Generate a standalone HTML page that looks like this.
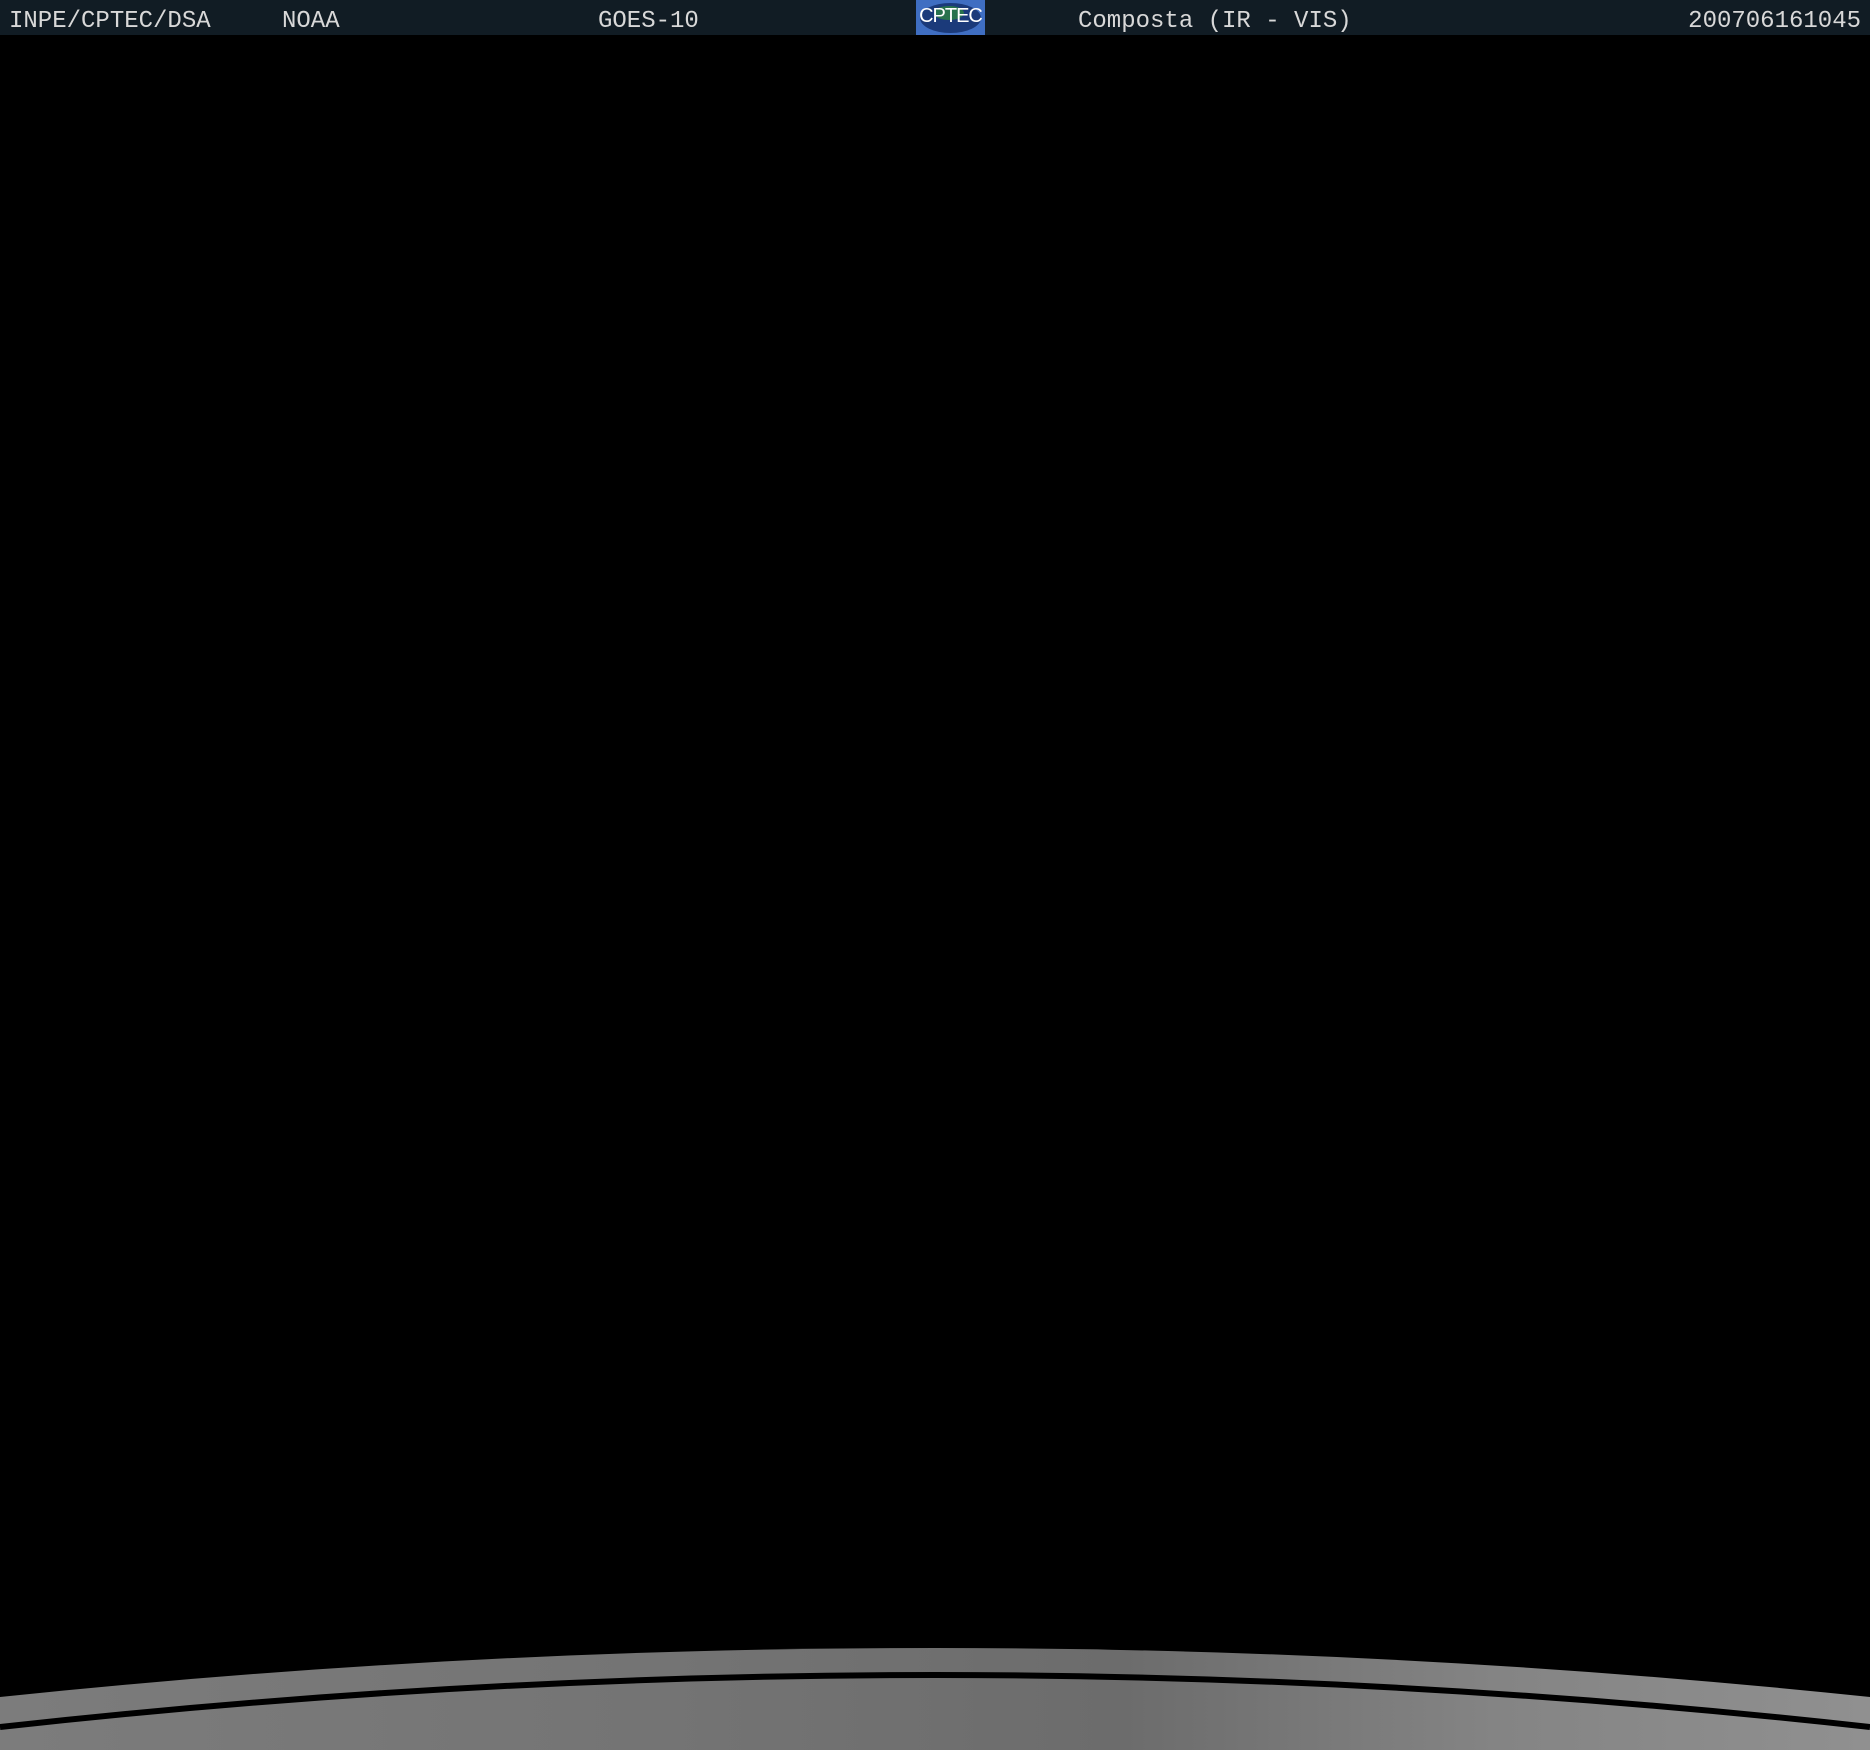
<!DOCTYPE html>
<html><head><meta charset="utf-8"><style>
html,body{margin:0;padding:0;background:#000;width:1870px;height:1750px;overflow:hidden;position:relative}
.bar{position:absolute;left:0;top:0;width:1870px;height:35px;background:#111c24}
.t{position:absolute;top:10px;font-family:"Liberation Mono",monospace;font-size:24px;color:#d8d8d8;line-height:24px;white-space:pre}
.logo{position:absolute;left:916px;top:0;width:69px;height:35px;background:#3f6ec2;overflow:hidden}
.logo .e{position:absolute;left:4px;top:3px;width:61px;height:30px;border-radius:50%;background:#1b3a7a}
.logo .g{position:absolute;left:18px;top:6px;width:30px;height:14px;border-radius:50%;background:#2e8a3a;opacity:.7}
.logo span{position:absolute;left:0;width:69px;top:5px;text-align:center;font-family:"Liberation Sans",sans-serif;font-size:20px;color:#fff;letter-spacing:-1px}
</style></head><body>
<div class="bar"></div>
<div class="t" style="left:9px">INPE/CPTEC/DSA</div>
<div class="t" style="left:282px">NOAA</div>
<div class="t" style="left:598px">GOES-10</div>
<div class="logo"><div class="e"></div><div class="g"></div><span>CPTEC</span></div>
<div class="t" style="left:1078px">Composta (IR - VIS)</div>
<div class="t" style="right:9px">200706161045</div>
<svg style="position:absolute;left:0;top:0;display:block" width="1870" height="1750" viewBox="0 0 1870 1750">
<defs><linearGradient id="g" x1="0" x2="1" y1="0" y2="0">
<stop offset="0" stop-color="#7c7c7c"/><stop offset=".35" stop-color="#747474"/><stop offset=".6" stop-color="#6c6c6c"/><stop offset=".8" stop-color="#848484"/><stop offset="1" stop-color="#909090"/></linearGradient></defs>
<path d="M0 1697 Q935 1599 1870 1697 L1870 1750 L0 1750 Z" fill="url(#g)"/>
<path d="M0 1727 Q935 1623 1870 1727" fill="none" stroke="#000" stroke-width="6"/>
</svg>
</body></html>
